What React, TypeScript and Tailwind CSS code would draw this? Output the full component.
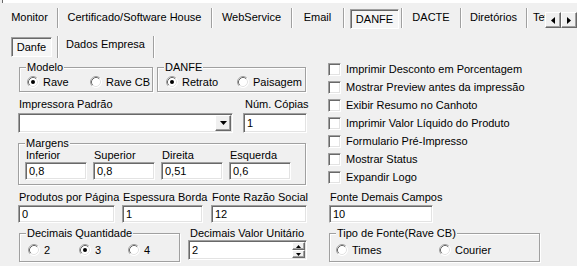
import React from 'react';

const sunken =
  'bg-white border border-t-[#a0a0a0] border-l-[#a0a0a0] border-r-white border-b-white shadow-[inset_1px_1px_0_#696969,inset_-1px_-1px_0_#e3e3e3]';
const raised =
  'bg-[#f0f0f0] border border-t-white border-l-white border-r-[#696969] border-b-[#696969] shadow-[inset_-1px_-1px_0_#a0a0a0]';
const etched = 'border border-[#a0a0a0] shadow-[inset_1px_1px_0_#fff,1px_1px_0_#fff]';

const Sep = ({ tall }: { tall?: boolean }) => (
  <div
    className={
      tall
        ? 'w-px h-[22px] mt-[5px] bg-[#a0a0a0] shadow-[1px_0_0_#fff]'
        : 'w-px h-[20px] mt-[5px] bg-[#a0a0a0] shadow-[1px_0_0_#fff]'
    }
  />
);

const Radio = ({ checked }: { checked?: boolean }) => (
  <svg width="12" height="12" viewBox="0 0 12 12" className="shrink-0">
    <circle cx="6" cy="6" r="5.5" fill="#fff" />
    <path d="M9.89 2.11 A5.5 5.5 0 0 0 2.11 9.89" fill="none" stroke="#a0a0a0" />
    <path d="M9.18 2.82 A4.5 4.5 0 0 0 2.82 9.18" fill="none" stroke="#696969" />
    <path d="M9.89 2.11 A5.5 5.5 0 0 1 2.11 9.89" fill="none" stroke="#fff" />
    <path d="M9.18 2.82 A4.5 4.5 0 0 1 2.82 9.18" fill="none" stroke="#e3e3e3" />
    {checked && <circle cx="6" cy="6" r="2" fill="#000" />}
  </svg>
);

const Option = ({ label, checked, w }: { label: string; checked?: boolean; w: string }) => (
  <div className={`flex items-center gap-[4px] ${w}`}>
    <Radio checked={checked} />
    <span className="whitespace-nowrap">{label}</span>
  </div>
);

const Check = ({ label }: { label: string }) => (
  <div className="flex items-center gap-[5px] h-[18px]">
    <div className={`w-[13px] h-[13px] shrink-0 ${sunken}`} />
    <span className="whitespace-nowrap">{label}</span>
  </div>
);

const Group = ({ title, className, children }: { title: string; className: string; children: React.ReactNode }) => (
  <fieldset className={`${etched} m-0 min-w-0 pl-[6px] ${className}`}>
    <legend className="px-px leading-[12px] bg-[#f0f0f0] whitespace-nowrap">{title}</legend>
    {children}
  </fieldset>
);

const Field = ({ value, w, h }: { value: string; w: string; h: string }) => (
  <div className={`${sunken} ${w} ${h} pl-[3px] flex items-center`}>{value}</div>
);

const Labeled = ({ label, value, w }: { label: string; value: string; w: string }) => (
  <div className={`flex flex-col ${w}`}>
    <span className="pl-px whitespace-nowrap">{label}</span>
    <Field value={value} w="w-full" h="h-[18px] mt-[1px]" />
  </div>
);

export default function App() {
  return (
    <div className="w-[577px] h-[266px] overflow-hidden bg-[#f0f0f0] text-[11px] leading-[13px] text-black font-['Liberation_Sans',Arial,sans-serif]">
      <div className="h-[3px] ml-[2px] border-l border-[#696969] bg-white" />

      {/* main tabs */}
      <div className="flex h-[28px] pl-[2px]">
        <div className="w-[55px] flex items-center justify-center">Monitor</div>
        <Sep />
        <div className="w-[153px] flex items-center justify-center">Certificado/Software House</div>
        <Sep />
        <div className="w-[79px] flex items-center justify-center">WebService</div>
        <Sep />
        <div className="w-[51px] flex items-center justify-center">Email</div>
        <Sep />
        <div className="w-[57px] pl-[6px] pt-[6px]">
          <div className="w-[49px] h-[20px] flex items-center justify-center bg-[#f6f6f6] border border-t-[#a0a0a0] border-l-[#a0a0a0] border-r-white border-b-white shadow-[inset_1px_1px_0_#696969]">
            DANFE
          </div>
        </div>
        <Sep />
        <div className="w-[58px] flex items-center justify-center">DACTE</div>
        <Sep />
        <div className="w-[65px] flex items-center justify-center">Diretórios</div>
        <Sep />
        <div className="w-[18px] pl-[6px] overflow-hidden whitespace-nowrap flex items-center">Tef</div>
        <div className="flex mt-[9px] h-[16px]">
          <div className={`${raised} w-[16px] h-[16px] flex items-center justify-center`}>
            <svg width="4" height="7" viewBox="0 0 4 7"><path d="M4 0 L0 3.5 L4 7 Z" fill="#000" /></svg>
          </div>
          <div className={`${raised} w-[16px] h-[16px] flex items-center justify-center`}>
            <svg width="4" height="7" viewBox="0 0 4 7"><path d="M0 0 L4 3.5 L0 7 Z" fill="#000" /></svg>
          </div>
        </div>
      </div>

      {/* sub tabs */}
      <div className="flex h-[27px] pl-[11px]">
        <div className="w-[41px] h-[20px] mt-[6px] flex items-center justify-center bg-[#f6f6f6] border border-t-[#a0a0a0] border-l-[#a0a0a0] border-r-white border-b-white shadow-[inset_1px_1px_0_#696969]">
          Danfe
        </div>
        <div className="w-[5px]" />
        <Sep tall />
        <div className="w-[95px] flex items-center justify-center">Dados Empresa</div>
        <Sep tall />
      </div>

      {/* page content */}
      <div className="flex pl-[18px]">
        {/* left column */}
        <div className="w-[289px] shrink-0 flex flex-col">
          <div className="flex mt-[3px]">
            <Group title="Modelo" className="ml-px w-[134px] h-[31px]">
              <div className="flex items-center h-[14px] mt-[2px] pl-px">
                <Option label="Rave" checked w="w-[63px]" />
                <Option label="Rave CB" w="w-[60px]" />
              </div>
            </Group>
            <Group title="DANFE" className="ml-[4px] w-[149px] h-[31px]">
              <div className="flex items-center h-[14px] mt-[2px] pl-[2px]">
                <Option label="Retrato" checked w="w-[71px]" />
                <Option label="Paisagem" w="w-[64px]" />
              </div>
            </Group>
          </div>

          <div className="flex mt-[6px] whitespace-nowrap">
            <span className="w-[227px] shrink-0 pl-px">Impressora Padrão</span>
            <span>Núm. Cópias</span>
          </div>
          <div className="flex mt-[2px]">
            <div className={`${sunken} w-[215px] h-[20px] flex justify-end p-px`}>
              <div className={`${raised} w-[16px] h-[16px] flex items-center justify-center`}>
                <svg width="7" height="4" viewBox="0 0 7 4"><path d="M0 0 L7 0 L3.5 4 Z" fill="#000" /></svg>
              </div>
            </div>
            <Field value="1" w="w-[64px] ml-[10px]" h="h-[20px]" />
          </div>

          <Group title="Margens" className="mt-[4px] w-[288px] h-[48px]">
            <div className="flex gap-[6px] leading-[12px]">
              <Labeled label="Inferior" value="0,8" w="w-[62px]" />
              <Labeled label="Superior" value="0,8" w="w-[62px]" />
              <Labeled label="Direita" value="0,51" w="w-[62px]" />
              <Labeled label="Esquerda" value="0,6" w="w-[62px]" />
            </div>
          </Group>

          <div className="flex mt-[6px]">
            <Labeled label="Produtos por Página" value="0" w="w-[97px]" />
            <Labeled label="Espessura Borda" value="1" w="w-[81px] ml-[7px]" />
            <Labeled label="Fonte Razão Social" value="12" w="w-[96px] ml-[8px]" />
          </div>

          <div className="flex mt-[4px]">
            <Group title="Decimais Quantidade" className="ml-px w-[161px] h-[35px]">
              <div className="flex items-center h-[14px] mt-[4px] pl-[2px]">
                <Option label="2" w="w-[51px]" />
                <Option label="3" checked w="w-[49px]" />
                <Option label="4" w="w-[40px]" />
              </div>
            </Group>
            <div className="ml-[8px] w-[119px] flex flex-col">
              <span className="pl-[2px] whitespace-nowrap">Decimais Valor Unitário</span>
              <div className={`${sunken} h-[20px] flex items-center justify-between pl-[3px] pr-px`}>
                <span>2</span>
                <div className="flex flex-col">
                  <div className={`${raised} w-[13px] h-[8px] flex items-center justify-center`}>
                    <svg width="5" height="3" viewBox="0 0 5 3"><path d="M0 3 L5 3 L2.5 0 Z" fill="#000" /></svg>
                  </div>
                  <div className={`${raised} w-[13px] h-[8px] flex items-center justify-center`}>
                    <svg width="5" height="3" viewBox="0 0 5 3"><path d="M0 0 L5 0 L2.5 3 Z" fill="#000" /></svg>
                  </div>
                </div>
              </div>
            </div>
          </div>
        </div>

        {/* right column */}
        <div className="ml-[21px] flex flex-col">
          <div className="mt-[2px] flex flex-col">
            <Check label="Imprimir Desconto em Porcentagem" />
            <Check label="Mostrar Preview antes da impressão" />
            <Check label="Exibir Resumo no Canhoto" />
            <Check label="Imprimir Valor Líquido do Produto" />
            <Check label="Formulario Pré-Impresso" />
            <Check label="Mostrar Status" />
            <Check label="Expandir Logo" />
          </div>
          <div className="mt-[5px] ml-px">
            <Labeled label="Fonte Demais Campos" value="10" w="w-[104px]" />
          </div>
          <Group title="Tipo de Fonte(Rave CB)" className="mt-[4px] ml-px w-[211px] h-[35px]">
            <div className="flex items-center h-[14px] mt-[4px]">
              <Option label="Times" w="w-[103px]" />
              <Option label="Courier" w="w-[80px]" />
            </div>
          </Group>
        </div>
      </div>
    </div>
  );
}
